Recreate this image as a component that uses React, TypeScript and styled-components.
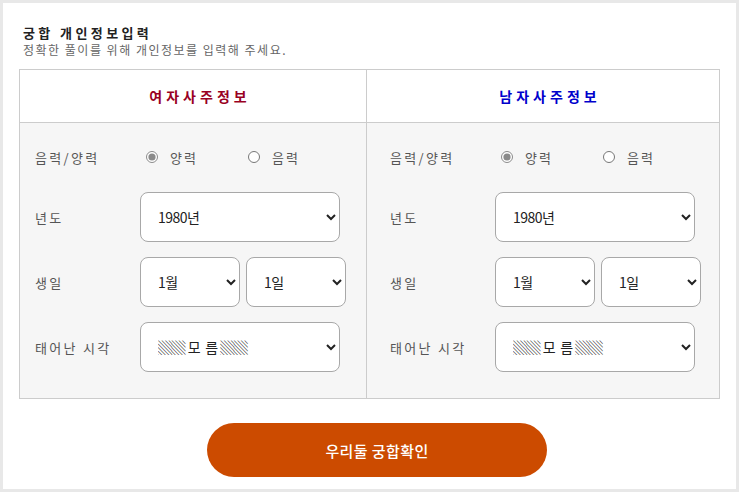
import styled, { createGlobalStyle } from "styled-components";

const GlobalStyle = createGlobalStyle`
  body {
    margin: 0;
    background: #e8e8e8;
    font-family: "Noto Sans CJK KR", "Noto Sans", sans-serif;
  }
`;

const Panel = styled.div`
  margin: 3px;
  width: 733px;
  height: 486px;
  background: #fff;
  box-sizing: border-box;
  padding: 21px 16px 0;
`;

const Head = styled.div`
  padding-left: 4px;
  margin-bottom: 11px;
`;

const Title = styled.div`
  font-size: 13px;
  font-weight: bold;
  color: #222;
  letter-spacing: 3.4px;
  line-height: 17px;
`;

const SubTitle = styled.div`
  font-size: 12px;
  color: #666;
  letter-spacing: 1.5px;
  line-height: 17px;
`;

const Table = styled.div`
  display: grid;
  grid-template-columns: 346px 1fr;
  border: 1px solid #cccccc;
`;

const Column = styled.div<{ $last?: boolean }>`
  display: flex;
  flex-direction: column;
  border-left: ${(p) => (p.$last ? "1px solid #cccccc" : "none")};
`;

const ColHeader = styled.div<{ $color: string }>`
  height: 52px;
  display: flex;
  align-items: center;
  justify-content: center;
  padding-left: 14px;
  border-bottom: 1px solid #cccccc;
  font-size: 14px;
  font-weight: bold;
  letter-spacing: 4px;
  color: ${(p) => p.$color};
  background: #fff;
`;

const Body = styled.div<{ $pad: number }>`
  background: #f6f6f6;
  padding: 14px 0 26px ${(p) => p.$pad}px;
  display: flex;
  flex-direction: column;
  gap: 15px;
`;

const Row = styled.div<{ $h?: number }>`
  height: ${(p) => p.$h ?? 50}px;
  display: flex;
  align-items: center;
`;

const Label = styled.div`
  width: 105px;
  flex-shrink: 0;
  font-size: 13px;
  color: #555;
  letter-spacing: 2.3px;
  white-space: nowrap;
`;

const RadioGroup = styled.div`
  display: flex;
  align-items: center;
  padding-left: 6px;
`;

const RadioLabel = styled.label`
  width: 102px;
  display: flex;
  align-items: center;
  gap: 12px;
  font-size: 13px;
  color: #555;
  letter-spacing: 2px;

  input {
    margin: 0;
    width: 12px;
    height: 12px;
    accent-color: #8a8a8a;
  }
`;

const Selects = styled.div`
  display: flex;
  gap: 6px;
`;

const Select = styled.select<{ $w: number }>`
  width: ${(p) => p.$w}px;
  height: 50px;
  box-sizing: border-box;
  border: 1px solid #a8a8a8;
  border-radius: 8px;
  background: #fff;
  padding: 0 10px 0 13px;
  font-family: "Noto Sans CJK KR", "Noto Sans", sans-serif;
  font-size: 14px;
  color: #222;
  letter-spacing: -0.5px;
`;

const Footer = styled.div`
  display: flex;
  justify-content: center;
  padding: 24px 0 0 15px;
`;

const Submit = styled.button`
  width: 340px;
  height: 54px;
  border: none;
  border-radius: 27px;
  background: #cc4b00;
  color: #fff;
  font-family: "Noto Sans CJK KR", "Noto Sans", sans-serif;
  font-size: 15px;
  font-weight: 500;
  letter-spacing: 0.4px;
  cursor: pointer;
`;

type PersonProps = { title: string; color: string; name: string; pad: number };

const Person = ({ title, color, name, pad }: PersonProps) => (
  <>
    <ColHeader $color={color}>{title}</ColHeader>
    <Body $pad={pad}>
      <Row $h={40}>
        <Label>음력/양력</Label>
        <RadioGroup>
          <RadioLabel>
            <input type="radio" name={name} defaultChecked />
            양력
          </RadioLabel>
          <RadioLabel>
            <input type="radio" name={name} />
            음력
          </RadioLabel>
        </RadioGroup>
      </Row>
      <Row>
        <Label>년도</Label>
        <Select $w={200} defaultValue="1980">
          <option value="1980">1980년</option>
        </Select>
      </Row>
      <Row>
        <Label>생일</Label>
        <Selects>
          <Select $w={100}>
            <option>1월</option>
          </Select>
          <Select $w={100}>
            <option>1일</option>
          </Select>
        </Selects>
      </Row>
      <Row>
        <Label>태어난 시각</Label>
        <Select $w={200}>
          <option>{"▒▒\u00a0모\u00a0\u00a0름\u00a0▒▒"}</option>
        </Select>
      </Row>
    </Body>
  </>
);

const App = () => {
  return (
    <>
      <GlobalStyle />
      <Panel>
        <Head>
          <Title>궁합 개인정보입력</Title>
          <SubTitle>정확한 풀이를 위해 개인정보를 입력해 주세요.</SubTitle>
        </Head>
        <Table>
          <Column>
            <Person title="여자사주정보" color="#990022" name="w" pad={15} />
          </Column>
          <Column $last>
            <Person title="남자사주정보" color="#0000cc" name="m" pad={23} />
          </Column>
        </Table>
        <Footer>
          <Submit>우리둘 궁합확인</Submit>
        </Footer>
      </Panel>
    </>
  );
};

export default App;
